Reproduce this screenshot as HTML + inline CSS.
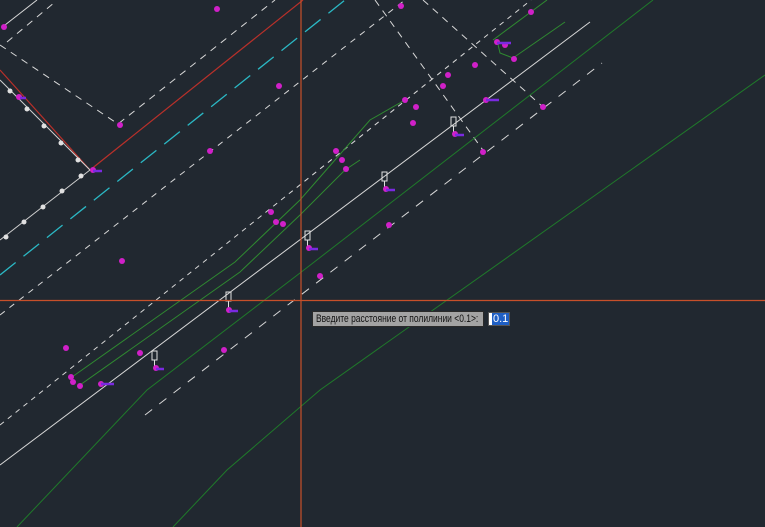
<!DOCTYPE html>
<html><head><meta charset="utf-8"><style>
html,body{margin:0;padding:0;background:#212830;overflow:hidden}
#c{position:relative;width:765px;height:527px}
svg{position:absolute;left:0;top:0}
.tip{position:absolute;left:312px;top:311px;width:172px;height:16px;background:#a3a3a3;border:1px solid #2a2a2a;box-sizing:border-box;color:#111;white-space:nowrap;overflow:hidden}
.tip span{position:absolute;left:3px;top:1px;font:11px "Liberation Sans",sans-serif;line-height:12px;display:inline-block;transform:scaleX(0.77);transform-origin:0 0}
.inp{position:absolute;left:488px;top:312px;width:22px;height:14px;background:#fff;border:1px solid #555;box-sizing:border-box}
.inp span{position:absolute;left:3px;top:0;background:#1f5fc4;color:#fff;font:11px "Liberation Sans",sans-serif;line-height:12px;padding:0 1px}
</style></head><body><div id="c">
<svg width="765" height="527" viewBox="0 0 765 527">
<g fill="none" stroke-width="1">
<path d="M0 45 L118 124 L275 0" stroke="#d8d8d8" stroke-dasharray="7 6"/>
<path d="M7 42 L55 2" stroke="#d8d8d8" stroke-dasharray="7 6"/>
<path d="M5 25 L37 0" stroke="#d8d8d8"/>
<path d="M375 0 L485 153" stroke="#d8d8d8" stroke-dasharray="7 6"/>
<path d="M423 0 L543 107" stroke="#d8d8d8" stroke-dasharray="7 6"/>
<path d="M0 70 L90 170 L303 0" stroke="#b8302a" stroke-width="1.2"/>
<path d="M0 80 L90 170 L0 240" stroke="#d0d0d0"/>
<g fill="#e0e0e0" stroke="none">
<circle cx="10" cy="91" r="2.5"/><circle cx="27" cy="109" r="2.5"/><circle cx="44" cy="126" r="2.5"/><circle cx="61" cy="143" r="2.5"/><circle cx="78" cy="160" r="2.5"/>
<circle cx="81" cy="176" r="2.5"/><circle cx="62" cy="191" r="2.5"/><circle cx="43" cy="207" r="2.5"/><circle cx="24" cy="222" r="2.5"/><circle cx="6" cy="237" r="2.5"/>
</g>
<path d="M0 275 L345 0" stroke="#2bb8c4" stroke-width="1.3" stroke-dasharray="20 10"/>
<path d="M0 315 L405 0" stroke="#d8d8d8" stroke-dasharray="6 6"/>
<path d="M0 425 L531 0" stroke="#d8d8d8" stroke-dasharray="5 5"/>
<path d="M145 415 L602 63" stroke="#d8d8d8" stroke-dasharray="9 9"/>
<path d="M0 465 L590 22" stroke="#d8d8d8"/>
<path d="M17 527 L147 390 L300 273 L653 0" stroke="#1f7a2a"/>
<path d="M173 527 L227 470 L320 390 L765 75" stroke="#1f7a2a"/>
<path d="M72 377 L235 262 L300 200 L335 160 L370 120 L405 100" stroke="#2f8a30"/>
<path d="M80 385 L240 272 L300 215 L345 170 L360 160" stroke="#2f8a30"/>
<path d="M493 40 L547 0" stroke="#2f8a30"/>
<path d="M513 58 L565 22" stroke="#2f8a30"/>
<path d="M497 40 L500 53 L513 58" stroke="#2f8a30"/>
<g stroke="#e0e0e0">
<rect x="226" y="292" width="5" height="9"/><path d="M228.5 301 V309"/>
<rect x="305" y="231" width="5" height="9"/><path d="M307.5 240 V247"/>
<rect x="382" y="172" width="5" height="9"/><path d="M384.5 181 V189"/>
<rect x="451" y="117" width="5" height="9"/><path d="M453.5 126 V134"/>
<rect x="152" y="351" width="5" height="9"/><path d="M154.5 360 V368"/>
</g>
</g>
<g fill="#d020c8">
<circle cx="217" cy="9" r="3"/><circle cx="4" cy="27" r="3"/><circle cx="120" cy="125" r="3"/><circle cx="93" cy="170" r="3"/><circle cx="19" cy="97" r="3"/>
<circle cx="279" cy="86" r="3"/><circle cx="210" cy="151" r="3"/><circle cx="122" cy="261" r="3"/>
<circle cx="401" cy="6" r="3"/><circle cx="531" cy="12" r="3"/><circle cx="497" cy="42" r="3"/><circle cx="505" cy="45" r="3"/><circle cx="514" cy="59" r="3"/>
<circle cx="475" cy="65" r="3"/><circle cx="448" cy="75" r="3"/><circle cx="443" cy="86" r="3"/><circle cx="405" cy="100" r="3"/><circle cx="416" cy="107" r="3"/><circle cx="413" cy="123" r="3"/>
<circle cx="486" cy="100" r="3"/><circle cx="543" cy="107" r="3"/><circle cx="483" cy="152" r="3"/>
<circle cx="336" cy="151" r="3"/><circle cx="342" cy="160" r="3"/><circle cx="346" cy="169" r="3"/>
<circle cx="271" cy="212" r="3"/><circle cx="276" cy="222" r="3"/><circle cx="283" cy="224" r="3"/>
<circle cx="389" cy="225" r="3"/><circle cx="320" cy="276" r="3"/><circle cx="224" cy="350" r="3"/><circle cx="66" cy="348" r="3"/>
<circle cx="140" cy="353" r="3"/><circle cx="71" cy="377" r="3"/><circle cx="73" cy="382" r="3"/><circle cx="80" cy="386" r="3"/><circle cx="101" cy="384" r="3"/>
<circle cx="229" cy="310" r="3"/><circle cx="309" cy="248" r="3"/><circle cx="386" cy="189" r="3"/><circle cx="455" cy="134" r="3"/><circle cx="156" cy="368" r="3"/>
</g>
<g stroke="#7a2ae0" stroke-width="2.5">
<path d="M93 171 H102 M20 98 H26 M101 384 H114 M229 311 H238 M309 249 H318 M386 190 H395 M455 135 H464 M156 369 H164 M486 100 H499 M497 43 H511"/>
</g>
<path d="M301 0 V527 M0 300.5 H765" stroke="#c8502a" stroke-width="1.2" fill="none"/>
</svg>
<div class="tip"><span>Введите расстояние от полилинии &lt;0.1&gt;:</span></div>
<div class="inp"><span>0.1</span></div>
</div></body></html>
